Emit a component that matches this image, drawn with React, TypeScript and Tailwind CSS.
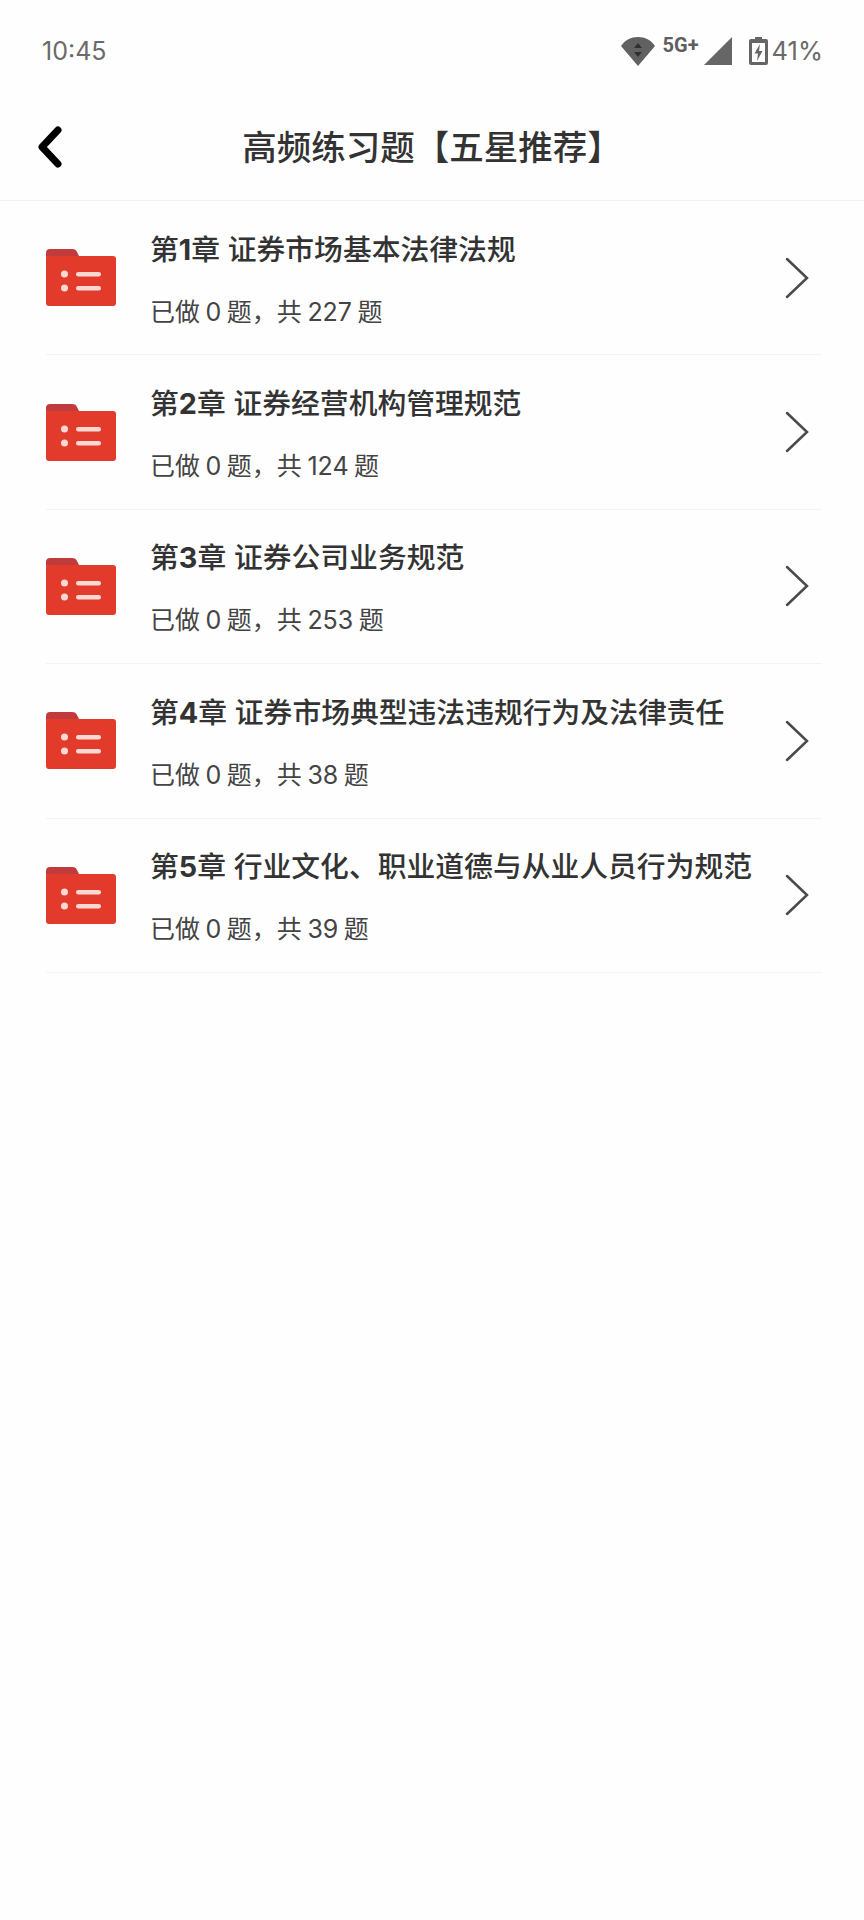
import React from 'react';

const chapters = [
  { no: 1, title: '证券市场基本法律法规', total: 227 },
  { no: 2, title: '证券经营机构管理规范', total: 124 },
  { no: 3, title: '证券公司业务规范', total: 253 },
  { no: 4, title: '证券市场典型违法违规行为及法律责任', total: 38 },
  { no: 5, title: '行业文化、职业道德与从业人员行为规范', total: 39 },
];

const FolderIcon = () => (
  <svg width="70" height="57" viewBox="0 0 70 57" className="shrink-0">
    <path d="M0 4a4 4 0 0 1 4-4h22c3 0 4 1 5 3l2 4H4a4 4 0 0 0-4 4z" fill="#c23b3c" />
    <rect x="0" y="7" width="70" height="50" rx="3" fill="#e23a2b" />
    <circle cx="18.500" cy="25" r="3.500" fill="#fbd9d2" />
    <circle cx="18.500" cy="39" r="3.500" fill="#fbd9d2" />
    <rect x="30" y="23" width="25" height="4.500" rx="2.200" fill="#fbd9d2" />
    <rect x="30" y="37" width="25" height="4.500" rx="2.200" fill="#fbd9d2" />
  </svg>
);

const StatusIcons = () => (
  <div className="flex items-center">
    <svg width="34" height="29" viewBox="0 0 34 29">
      <path d="M0 9C4 3 10 0 17 0s13 3 17 9L17 29z" fill="#616161" />
      <path d="M17 6l4 5h-8zM17 20l-4-5h8z" fill="#2f2f2f" />
    </svg>
    <span className="ml-[8px] mb-[13px] text-[20px] leading-[18px] font-bold text-[#5f5f5f] font-['Roboto',sans-serif]">5G+</span>
    <svg width="28" height="28" viewBox="0 0 28 28" className="ml-[5px]">
      <path d="M28 0v28H0z" fill="#666666" />
    </svg>
    <svg width="19" height="28" viewBox="0 0 19 28" className="ml-[17px]">
      <path d="M6 0h7v2h4a2 2 0 0 1 2 2v22a2 2 0 0 1-2 2H2a2 2 0 0 1-2-2V4a2 2 0 0 1 2-2h4z" fill="#666666" />
      <rect x="3" y="6" width="13" height="19" fill="#fefefe" />
      <path d="M11 7L5.500 16.500H9L8 24l5.500-10H10z" fill="#666666" />
    </svg>
    <span className="ml-[4px] text-[25.500px] leading-[30px] text-[#6a6a6a] font-['Inter',sans-serif]">41%</span>
  </div>
);

export default function App() {
  return (
    <div className="min-h-[1920px] w-[864px] bg-[#fefefe] font-['Inter','Noto_Sans_CJK_SC',sans-serif]">
      <div className="flex h-[100px] items-center justify-between pl-[42px] pr-[41px] pt-[2px]">
        <span className="text-[25px] leading-[30px] text-[#6a6a6a]">10:45</span>
        <StatusIcons />
      </div>

      <div className="relative flex h-[101px] items-center justify-center border-b border-[#f2f2f2] pb-[5px]">
        <svg width="30" height="44" viewBox="0 0 30 44" className="absolute left-[35px] top-[25px]">
          <path d="M23 5L7 22l16 17" fill="none" stroke="#000000" strokeWidth="7" strokeLinecap="round" strokeLinejoin="round" />
        </svg>
        <h1 className="text-[34.500px] leading-[48px] font-medium text-[#333333]">高频练习题【五星推荐】</h1>
      </div>

      <div className="pl-[46px] pr-[42px]">
        {chapters.map((c) => (
          <div key={c.no} className="flex h-[154.400px] items-center border-b border-[#f3f3f3]">
            <FolderIcon />
            <div className="ml-[34px] flex-1 pt-[3px]">
              <div className="text-[28.800px] leading-[42px] font-medium text-[#333333]">
                第<span className="font-bold">{c.no}</span>章 {c.title}
              </div>
              <div className="mt-[23px] text-[25px] leading-[36px] text-[#444444] [word-spacing:-1.500px]">已做 0 题，共 {c.total} 题</div>
            </div>
            <svg width="24" height="42" viewBox="0 0 24 42" className="mr-[13px] shrink-0">
              <path d="M2 2l20 19L2 40" fill="none" stroke="#4a4a4a" strokeWidth="2.500" strokeLinecap="round" strokeLinejoin="miter" />
            </svg>
          </div>
        ))}
      </div>
    </div>
  );
}
